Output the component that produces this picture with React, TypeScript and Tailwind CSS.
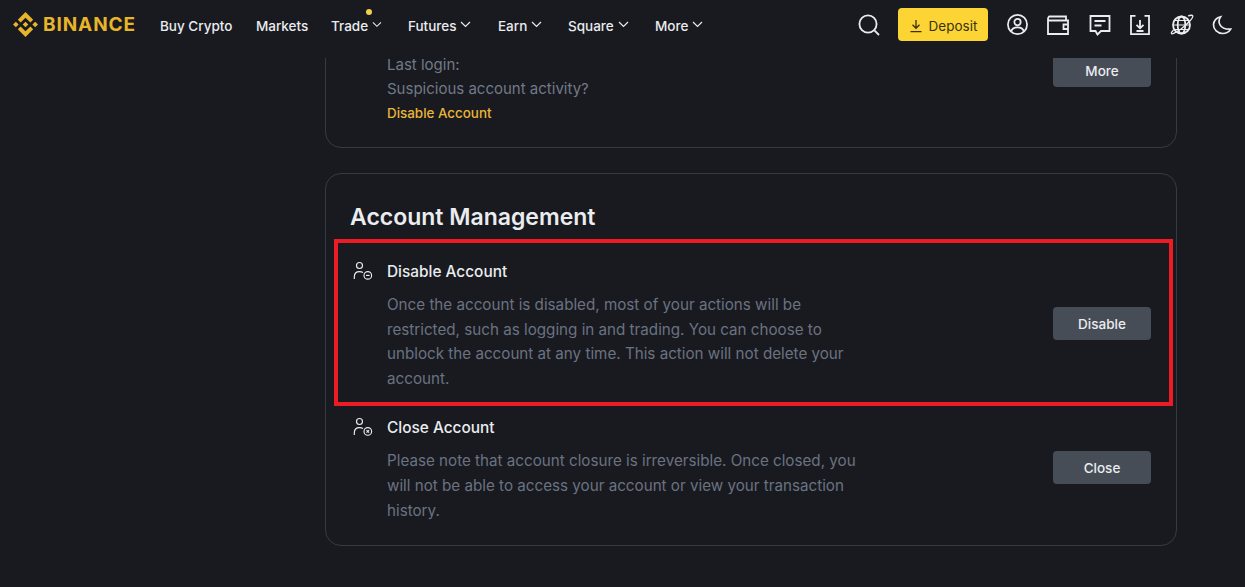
import React from "react";

const Chevron = () => (
  <svg width="11" height="7" viewBox="0 0 11 7" fill="none" stroke="#eaecef" strokeWidth="1.2" className="mt-[-3px] ml-[4px]">
    <path d="M1 1 L5.5 5.5 L10 1" />
  </svg>
);

const NavItem = ({ label, chevron = true, dot = false, cls }: { label: string; chevron?: boolean; dot?: boolean; cls: string }) => (
  <div className={`relative flex items-center whitespace-nowrap text-[13.5px] font-medium text-[#eaecef] ${cls}`}>
    <span>{label}</span>
    {chevron && <Chevron />}
    {dot && <span className="absolute left-[35px] top-[-7px] h-[6px] w-[6px] rounded-full bg-[#f0d04a]" />}
  </div>
);

const Ic = ({ children, cls, vb = "0 0 24 24" }: { children: React.ReactNode; cls: string; vb?: string }) => (
  <svg viewBox={vb} fill="none" stroke="#eaecef" strokeWidth="1.8" className={cls}>
    {children}
  </svg>
);

const UserIcon = ({ kind }: { kind: "minus" | "close" }) => (
  <svg width="20" height="20" viewBox="0 0 20 20" fill="none" stroke="#eaecef" strokeWidth="1.15" className="shrink-0">
    <circle cx="6.5" cy="4.5" r="3" />
    <path d="M1.3 18 V16 C1.3 12.5 3.5 10.6 6.5 10.6 C8 10.6 9 10.9 10 11.5" />
    <circle cx="14.8" cy="14.4" r="3.8" />
    {kind === "minus" ? (
      <path d="M13 14.4 H16.6" />
    ) : (
      <path d="M13.5 13.1 L16.1 15.7 M16.1 13.1 L13.5 15.7" />
    )}
  </svg>
);

const GrayButton = ({ label }: { label: string }) => (
  <button className="flex h-[33px] w-[98px] items-center justify-center rounded-[4px] bg-[#474d57] pt-[1px] text-[13.5px] font-medium text-[#eaecef]">
    {label}
  </button>
);

const Row = ({ kind, title, lines, label, btnCls }: { kind: "minus" | "close"; title: string; lines: string[]; label: string; btnCls: string }) => (
  <div className="flex items-start">
    <div className="w-[37px] pl-[3px]">
      <UserIcon kind={kind} />
    </div>
    <div className="flex-1">
      <div className="text-[15.4px] leading-[22px] font-medium text-[#eaecef]">{title}</div>
      <div className="mt-[10px] text-[15.2px] leading-[24.6px] text-[#6b7280]">
        {lines.map((l) => (
          <div key={l}>{l}</div>
        ))}
      </div>
    </div>
    <div className={btnCls}>
      <GrayButton label={label} />
    </div>
  </div>
);

export default function App() {
  return (
    <div className="relative h-[587px] w-[1245px] overflow-hidden bg-[#181a20] font-['Inter',sans-serif]">
      <header className="relative z-10 flex h-[58px] items-start bg-[#181a20] pt-[8px]">
        <div className="ml-[13px] flex h-[33px] items-center">
          <svg width="25" height="25" viewBox="0 0 32 32" fill="#e8b42a">
            <path d="M9.79 13.45L16 7.24l6.21 6.21 3.61-3.61L16 0 6.18 9.82zM0 16l3.61-3.61L7.22 16l-3.61 3.61zM9.79 18.55L16 24.76l6.21-6.21 3.61 3.61L16 32l-9.82-9.82zM24.78 16l3.61-3.61L32 16l-3.61 3.61zM19.66 16L16 12.34l-3.66 3.66L16 19.66z" />
          </svg>
          <span className="ml-[5px] pt-[2px] text-[19px] font-bold tracking-[0.9px] text-[#e8b42a]">BINANCE</span>
        </div>
        <nav className="flex h-[36px] items-center">
          <NavItem label="Buy Crypto" chevron={false} cls="ml-[24px] w-[71px]" />
          <NavItem label="Markets" chevron={false} cls="ml-[25px] w-[51px]" />
          <NavItem label="Trade" dot cls="ml-[24px] w-[51px]" />
          <NavItem label="Futures" cls="ml-[26px] w-[65px]" />
          <NavItem label="Earn" cls="ml-[25px] w-[45px]" />
          <NavItem label="Square" cls="ml-[25px] w-[62px]" />
          <NavItem label="More" cls="ml-[25px] w-[50px]" />
        </nav>
        <div className="ml-[152px] flex h-[33px] items-center">
          <Ic cls="h-[24px] w-[24px]">
            <circle cx="11" cy="11" r="8.6" />
            <path d="M17.4 17.4 L22 22" />
          </Ic>
          <button className="ml-[17px] flex h-[33px] w-[90px] items-center justify-center gap-[6px] rounded-[4px] bg-[#fcd535] pt-[3px] text-[13.5px] font-normal text-[#3a3112]">
            <svg width="14" height="14" viewBox="0 0 14 14" fill="none" stroke="#3a3112" strokeWidth="1.3">
              <path d="M7 1 V9 M3.5 5.8 L7 9.3 L10.5 5.8 M1.5 12.6 H12.5" />
            </svg>
            Deposit
          </button>
          <Ic cls="ml-[18px] h-[23px] w-[23px]">
            <circle cx="12" cy="12" r="10" />
            <circle cx="12" cy="9.5" r="3.3" />
            <path d="M5.5 19.5 C6 15.8 9 15 12 15 C15 15 18 15.8 18.5 19.5" />
          </Ic>
          <Ic cls="ml-[17px] h-[24px] w-[24px]">
            <path d="M2 6 V21 H22 V7.5 H3.5 C2.7 7.5 2 6.8 2 6 C2 5 2.7 3.5 3.5 3.5 H20 V7.5" />
            <path d="M22 11.5 H17.5 V16 H22" />
          </Ic>
          <Ic cls="ml-[18px] h-[24px] w-[24px]">
            <path d="M2.5 3 H21.5 V18 H13 L9.5 21.5 L7.5 18 H2.5 Z" />
            <path d="M6.5 8 H17.5 M6.5 12.5 H13.5" />
          </Ic>
          <Ic cls="ml-[16px] h-[24px] w-[24px]">
            <path d="M7.5 2.8 H3 V21.2 H21 V2.8 H16.5" />
            <path d="M12 7 V15 M8.5 11.8 L12 15.3 L15.5 11.8 M8.5 18 H15.5" />
          </Ic>
          <Ic cls="ml-[18px] h-[24px] w-[24px]">
            <circle cx="11.5" cy="12" r="8.5" />
            <ellipse cx="11.5" cy="12" rx="3.8" ry="8.5" />
            <path d="M3 12 H20 M4.5 7.5 H18.5 M4.5 16.5 H18.5" strokeWidth="1.2" />
            <path d="M18 3 C20.5 2 22.5 2 22.8 3 C23.3 5 17 11.5 11 16 C6 19.5 2 21.5 1.4 20.5 C1 19.8 2 18.5 3.5 17" strokeWidth="1.3" />
          </Ic>
          <Ic cls="ml-[17px] h-[22px] w-[22px]">
            <path d="M10.5 3 C7 8 8.5 17 21.5 16.5 C19.5 19.8 16 21.3 12.7 21.3 C7.2 21.3 2.7 17 2.7 11.8 C2.7 7.5 6 3.8 10.5 3 Z" />
          </Ic>
        </div>
      </header>

      <main className="h-[529px] overflow-hidden pl-[325px]">
        <section className="-mt-[42px] flex h-[132px] w-[852px] items-start justify-between rounded-[16px] border border-[#333b47] pt-[37px] pl-[61px] pr-[25px]">
          <div className="text-[15px] leading-[24.5px] text-[#727986]">
            <div className="mt-[5px] mb-[6px] h-[12px] leading-[12px]">Last login:</div>
            <div className="h-[24px]">Suspicious account activity?</div>
            <div className="text-[13.4px] font-medium text-[#e8b53a]">Disable Account</div>
          </div>
          <GrayButton label="More" />
        </section>

        <section className="relative mt-[25px] h-[373px] w-[852px] rounded-[16px] border border-[#333b47] pl-[24px] pr-[25px] pt-[28px]">
          <h2 className="text-[23px] leading-[30px] font-semibold text-[#eaecef]">Account Management</h2>
          <div className="mt-[29px]">
            <Row
              kind="minus"
              title="Disable Account"
              label="Disable"
              btnCls="mt-[46px]"
              lines={[
                "Once the account is disabled, most of your actions will be",
                "restricted, such as logging in and trading. You can choose to",
                "unblock the account at any time. This action will not delete your",
                "account.",
              ]}
            />
          </div>
          <div className="mt-[26px]">
            <Row
              kind="close"
              title="Close Account"
              label="Close"
              btnCls="mt-[34px]"
              lines={[
                "Please note that account closure is irreversible. Once closed, you",
                "will not be able to access your account or view your transaction",
                "history.",
              ]}
            />
          </div>
          <div className="absolute left-[8px] top-[65px] h-[167px] w-[839px] border-[4px] border-[#ed1c24]" />
        </section>
      </main>
    </div>
  );
}
